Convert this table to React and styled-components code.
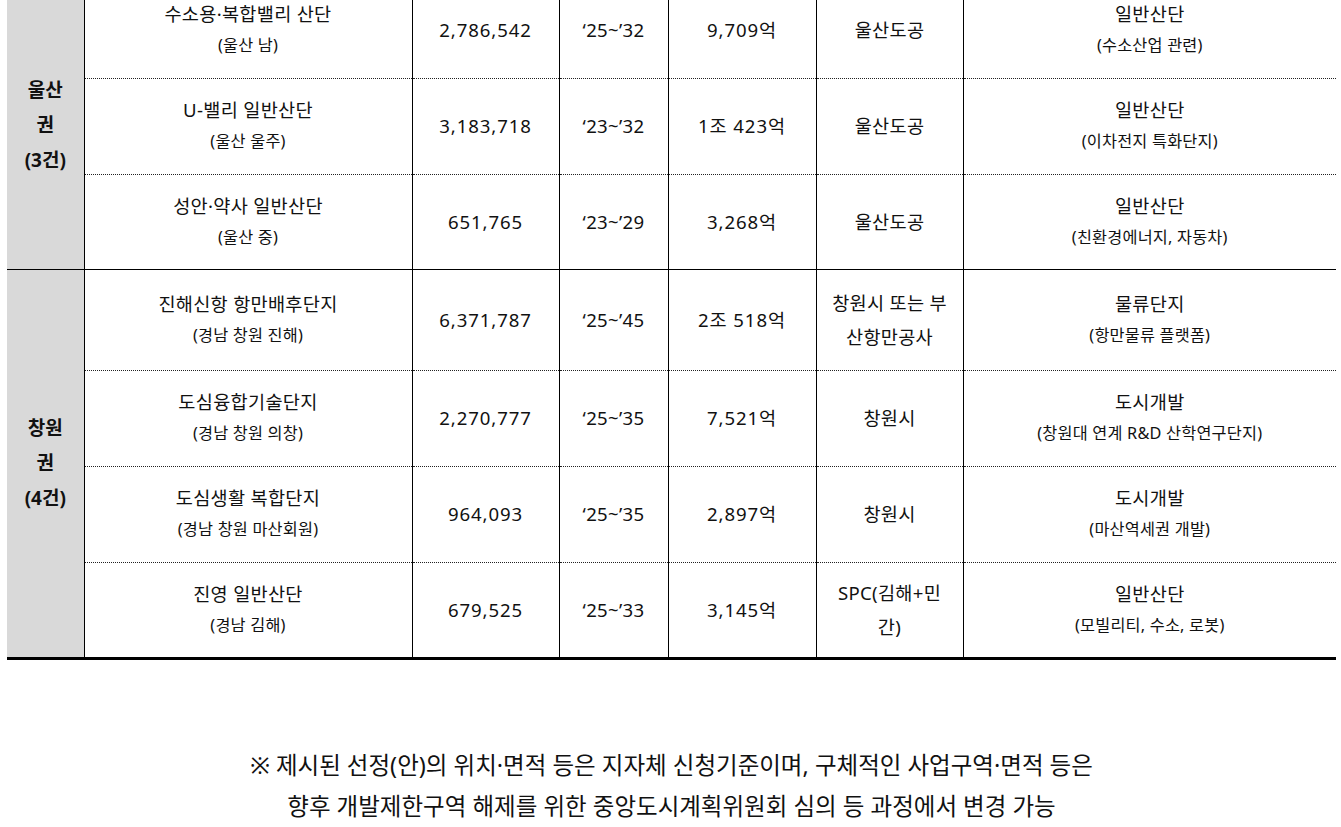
import React from "react";
import styled, { createGlobalStyle } from "styled-components";

const GlobalStyle = createGlobalStyle`
    html, body {
        margin: 0;
        padding: 0;
        background: #ffffff;
        overflow: hidden;
    }
    body {
        font-family: "Noto Sans", "Noto Sans CJK KR", sans-serif;
        color: #111111;
    }
`;

const groups = [
    {
        label: ["울산", "권", "(3건)"],
        rows: [
            { h: 96, name: "수소용·복합밸리 산단", place: "(울산 남)", area: "2,786,542", period: "‘25~’32", cost: "9,709억", entity: ["울산도공"], type: "일반산단", note: "(수소산업 관련)" },
            { h: 96, name: "U-밸리 일반산단", place: "(울산 울주)", area: "3,183,718", period: "‘23~’32", cost: "1조 423억", entity: ["울산도공"], type: "일반산단", note: "(이차전지 특화단지)" },
            { h: 95, name: "성안·약사 일반산단", place: "(울산 중)", area: "651,765", period: "‘23~’29", cost: "3,268억", entity: ["울산도공"], type: "일반산단", note: "(친환경에너지, 자동차)" },
        ],
    },
    {
        label: ["창원", "권", "(4건)"],
        rows: [
            { h: 101, name: "진해신항 항만배후단지", place: "(경남 창원 진해)", area: "6,371,787", period: "‘25~’45", cost: "2조 518억", entity: ["창원시 또는 부", "산항만공사"], type: "물류단지", note: "(항만물류 플랫폼)" },
            { h: 96, name: "도심융합기술단지", place: "(경남 창원 의창)", area: "2,270,777", period: "‘25~’35", cost: "7,521억", entity: ["창원시"], type: "도시개발", note: "(창원대 연계 R&D 산학연구단지)" },
            { h: 96, name: "도심생활 복합단지", place: "(경남 창원 마산회원)", area: "964,093", period: "‘25~’35", cost: "2,897억", entity: ["창원시"], type: "도시개발", note: "(마산역세권 개발)" },
            { h: 96, name: "진영 일반산단", place: "(경남 김해)", area: "679,525", period: "‘25~’33", cost: "3,145억", entity: ["SPC(김해+민", "간)"], type: "일반산단", note: "(모빌리티, 수소, 로봇)" },
        ],
    },
];

const App = () => {
    return (
        <Page>
            <GlobalStyle />
            <Table>
                <colgroup>
                    <col style={{ width: 77 }} />
                    <col style={{ width: 328 }} />
                    <col style={{ width: 147 }} />
                    <col style={{ width: 109 }} />
                    <col style={{ width: 148 }} />
                    <col style={{ width: 147 }} />
                    <col style={{ width: 373 }} />
                </colgroup>
                <tbody>
                    {groups.map((group, gi) =>
                        group.rows.map((row, ri) => {
                            const groupTop = ri === 0 && gi > 0;
                            const dotted = ri > 0;
                            const last = gi === groups.length - 1 && ri === group.rows.length - 1;
                            const cellProps = { $solidTop: groupTop, $dotted: dotted, $last: last, $h: row.h };
                            return (
                                <tr key={row.name}>
                                    {ri === 0 && (
                                        <GroupCell rowSpan={group.rows.length} $solidTop={groupTop} $last={gi === groups.length - 1}>
                                            {group.label.map((l) => (
                                                <GroupLine key={l}>{l}</GroupLine>
                                            ))}
                                        </GroupCell>
                                    )}
                                    <Cell {...cellProps}>
                                        <Main>{row.name}</Main>
                                        <Sub>{row.place}</Sub>
                                    </Cell>
                                    <Cell {...cellProps}>
                                        <Main $num>{row.area}</Main>
                                    </Cell>
                                    <Cell {...cellProps}>
                                        <Main>{row.period}</Main>
                                    </Cell>
                                    <Cell {...cellProps}>
                                        <Main $num>{row.cost}</Main>
                                    </Cell>
                                    <Cell {...cellProps}>
                                        {row.entity.map((e) => (
                                            <EntityLine key={e}>{e}</EntityLine>
                                        ))}
                                    </Cell>
                                    <Cell {...cellProps}>
                                        <Main>{row.type}</Main>
                                        <Sub>{row.note}</Sub>
                                    </Cell>
                                </tr>
                            );
                        })
                    )}
                </tbody>
            </Table>
            <Footnote>
                <p>※ 제시된 선정(안)의 위치·면적 등은 지자체 신청기준이며, 구체적인 사업구역·면적 등은</p>
                <p>향후 개발제한구역 해제를 위한 중앙도시계획위원회 심의 등 과정에서 변경 가능</p>
            </Footnote>
        </Page>
    );
};

export default App;

const Page = styled.div`
    width: 1341px;
    padding: 0 5px 0 7px;
    box-sizing: border-box;
`;

const Table = styled.table`
    width: 1329px;
    margin-top: -18px;
    border-collapse: collapse;
    table-layout: fixed;
`;

const GroupCell = styled.td`
    background-color: #d9d9d9;
    text-align: center;
    vertical-align: middle;
    padding: 0;
    border-top: ${(p) => (p.$solidTop ? "1px solid #000" : "none")};
    border-bottom: ${(p) => (p.$last ? "3px solid #000" : "none")};
`;

const GroupLine = styled.div`
    font-size: 19px;
    font-weight: 700;
    line-height: 35px;
    color: #111;
`;

const Cell = styled.td`
    height: ${(p) => p.$h}px;
    padding: 0 6px;
    box-sizing: border-box;
    text-align: center;
    vertical-align: middle;
    border-left: 1px solid #000;
    border-top: ${(p) =>
        p.$solidTop ? "1px solid #000" : p.$dotted ? "1px dotted #222" : "none"};
    border-bottom: ${(p) => (p.$last ? "3px solid #000" : "none")};
`;

const Main = styled.div`
    font-size: 18.6px;
    line-height: 30px;
    letter-spacing: ${(p) => (p.$num ? "0.9px" : "0.3px")};
    white-space: nowrap;
`;

const Sub = styled.div`
    font-size: 16.3px;
    line-height: 32px;
    letter-spacing: 0.2px;
    white-space: nowrap;
`;

const EntityLine = styled.div`
    font-size: 18.6px;
    line-height: 34px;
    letter-spacing: 0.3px;
    white-space: nowrap;
`;

const Footnote = styled.div`
    margin-top: 85px;
    text-align: center;
    font-size: 23.5px;
    line-height: 41px;
    color: #111;

    p {
        margin: 0;
    }
`;
